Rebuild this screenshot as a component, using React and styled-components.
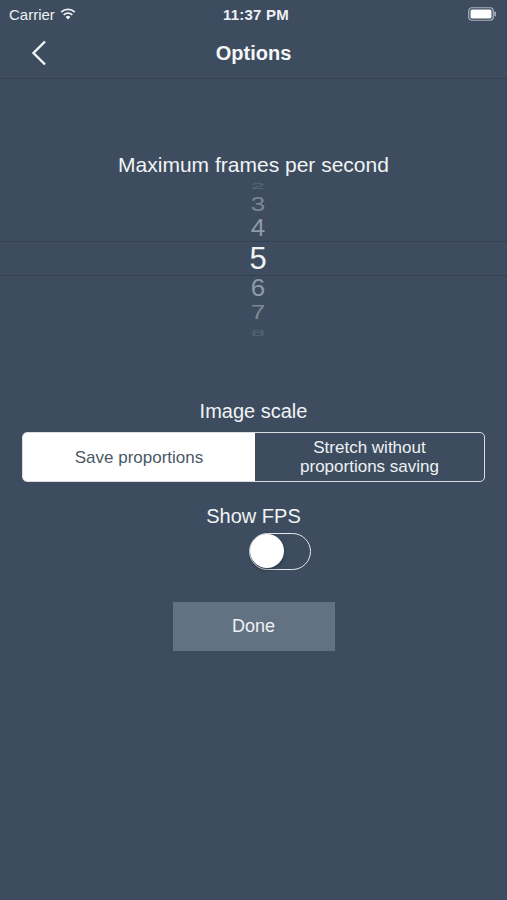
import { useState } from "react";
import styled, { createGlobalStyle } from "styled-components";

// 옵션 화면
const Global = createGlobalStyle`
  html, body {
    margin: 0;
    padding: 0;
    background: #3d4d5f;
    font-family: "Liberation Sans", Arial, sans-serif;
    color: #ffffff;
  }
`;

const Screen = styled.div`
  width: 507px;
  height: 900px;
  background: #3d4d5f;
  display: flex;
  flex-direction: column;
`;

const StatusBar = styled.div`
  height: 28px;
  display: grid;
  grid-template-columns: 1fr auto 1fr;
  align-items: center;
  padding: 0 10px 0 9px;
  font-size: 15px;
  color: #eef1f4;
  .left { display: flex; align-items: center; gap: 5px; }
  .time { font-weight: 700; letter-spacing: 0.2px; padding-left: 6px; }
  .right { display: flex; justify-content: flex-end; }
`;

const NavBar = styled.div`
  height: 50px;
  display: grid;
  grid-template-columns: 60px 1fr 60px;
  align-items: center;
  border-bottom: 1px solid #34424f;
  .title {
    text-align: center;
    font-size: 20px;
    font-weight: 700;
    color: #f4f6f8;
  }
  .back { padding-left: 31px; display: flex; align-items: center; }
`;

const Label = styled.div`
  text-align: center;
  font-size: ${(p) => p.size || 20}px;
  color: #f1f3f5;
  margin-top: ${(p) => p.top || 0}px;
`;

const Picker = styled.div`
  margin-top: 3px;
  height: 160px;
  display: flex;
  flex-direction: column;
  overflow: hidden;
`;

const PickerRow = styled.div`
  height: ${(p) => p.h}px;
  flex: none;
  display: flex;
  align-items: center;
  justify-content: center;
  padding-left: 9px;
  font-size: ${(p) => (p.selected ? 31 : 26)}px;
  color: ${(p) => p.color};
  border-top: ${(p) => (p.selected ? "1px solid #34424f" : "none")};
  border-bottom: ${(p) => (p.selected ? "1px solid #34424f" : "none")};
  span {
    display: inline-block;
    transform: scaleY(${(p) => p.sy});
  }
`;

const Segmented = styled.div`
  margin: 9px 22px 0;
  height: 48px;
  display: grid;
  grid-template-columns: 232px 1fr;
  border: 1px solid #d9dee3;
  border-radius: 5px;
  overflow: hidden;
`;

const Segment = styled.div`
  display: flex;
  align-items: center;
  justify-content: center;
  text-align: center;
  font-size: 17px;
  line-height: 19px;
  background: ${(p) => (p.active ? "#ffffff" : "transparent")};
  color: ${(p) => (p.active ? "#4b5866" : "#eef1f4")};
`;

const ToggleWrap = styled.div`
  display: flex;
  justify-content: center;
  margin-top: 5px;
  padding-left: 53px;
`;

const Toggle = styled.div`
  width: 62px;
  height: 37px;
  border: 1.5px solid #e3e7eb;
  border-radius: 20px;
  box-sizing: border-box;
  position: relative;
  &::after {
    content: "";
    position: absolute;
    top: 0;
    left: ${(p) => (p.on ? "26px" : "0")};
    width: 34px;
    height: 34px;
    border-radius: 50%;
    background: #ffffff;
    box-shadow: 0 2px 4px rgba(0, 0, 0, 0.3);
  }
`;

const DoneButton = styled.button`
  align-self: center;
  margin-top: 32px;
  width: 162px;
  height: 49px;
  border: none;
  background: #627282;
  color: #eef1f4;
  font-family: inherit;
  font-size: 18px;
`;

const rows = [
  { n: 2, h: 12, sy: 0.35, color: "#56667a" },
  { n: 3, h: 24, sy: 0.8, color: "#7a8896" },
  { n: 4, h: 25, sy: 0.92, color: "#8e9ba8" },
  { n: 5, h: 33, sy: 1, color: "#f0f3f5", selected: true },
  { n: 6, h: 24, sy: 0.92, color: "#8e9ba8" },
  { n: 7, h: 24, sy: 0.8, color: "#7a8896" },
  { n: 8, h: 18, sy: 0.35, color: "#56667a" },
];

const App = () => {
  const [mode, setMode] = useState(0);
  const [fps, setFps] = useState(false);

  return (
    <>
      <Global />
      <Screen>
        <StatusBar>
          <div className="left">
            Carrier
            <svg width="16" height="12" viewBox="0 0 16 12">
              <path d="M8 11.5 L5.6 8.9 A3.4 3.4 0 0 1 10.4 8.9 Z" fill="#eef1f4" />
              <path d="M3.7 6.9 A6.2 6.2 0 0 1 12.3 6.9" stroke="#eef1f4" strokeWidth="1.8" fill="none" />
              <path d="M1.2 4.2 A9.8 9.8 0 0 1 14.8 4.2" stroke="#eef1f4" strokeWidth="1.8" fill="none" />
            </svg>
          </div>
          <div className="time">11:37 PM</div>
          <div className="right">
            <svg width="29" height="14" viewBox="0 0 29 14">
              <rect x="0.75" y="0.75" width="24.5" height="12.5" rx="3" fill="none" stroke="#aab4be" strokeWidth="1.2" />
              <rect x="2.5" y="2.5" width="21" height="9" rx="1.5" fill="#ffffff" />
              <rect x="26.3" y="4.5" width="1.6" height="5" rx="0.8" fill="#aab4be" />
            </svg>
          </div>
        </StatusBar>
        <NavBar>
          <div className="back">
            <svg width="16" height="26" viewBox="0 0 16 26">
              <path d="M14 1.5 L2.5 13 L14 24.5" stroke="#f1f3f5" strokeWidth="2.4" fill="none" />
            </svg>
          </div>
          <div className="title">Options</div>
          <div />
        </NavBar>

        <Label top={74} size={21}>Maximum frames per second</Label>
        <Picker>
          {rows.map((r) => (
            <PickerRow key={r.n} h={r.h} sy={r.sy} color={r.color} selected={r.selected}>
              <span>{r.n}</span>
            </PickerRow>
          ))}
        </Picker>

        <Label top={60} size={20}>Image scale</Label>
        <Segmented>
          <Segment active={mode === 0} onClick={() => setMode(0)}>Save proportions</Segment>
          <Segment active={mode === 1} onClick={() => setMode(1)}>
            Stretch without
            <br />
            proportions saving
          </Segment>
        </Segmented>

        <Label top={23} size={20}>Show FPS</Label>
        <ToggleWrap>
          <Toggle on={fps} onClick={() => setFps(!fps)} />
        </ToggleWrap>

        <DoneButton>Done</DoneButton>
      </Screen>
    </>
  );
};

export default App;
